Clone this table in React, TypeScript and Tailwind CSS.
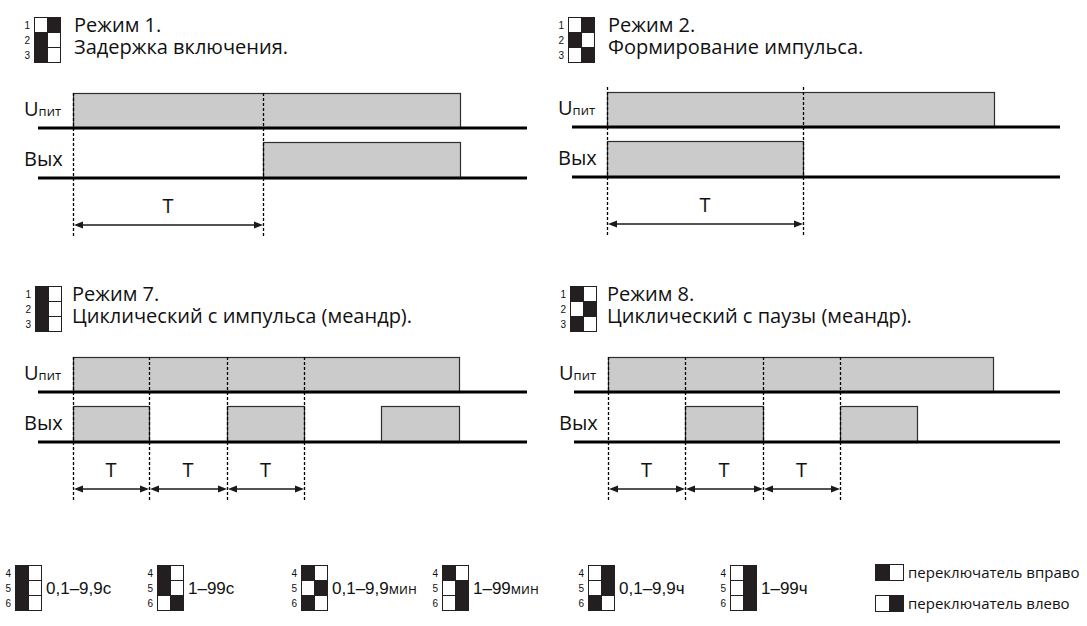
import React from 'react'

type Cell = 0 | 1
type Span = [number, number]

// small DIP-switch picture: numbers on the left, 2 columns of cells
const Dip = ({ nums, cells }: { nums: string[]; cells: Cell[][] }) => (
    <div className="flex items-start">
        <div className="flex w-[6px] flex-col items-end pt-[1px] mr-[4px] font-['Liberation_Sans',Arial,sans-serif] text-[10px] leading-[15px]">
            {nums.map(n => (
                <span key={n}>{n}</span>
            ))}
        </div>
        <div className="grid grid-cols-[12px_12px] grid-rows-[14px_14px_14px] gap-px border border-[#231f20] bg-[#231f20]">
            {cells.flat().map((c, i) => (
                <div key={i} className={c ? 'bg-[#231f20]' : 'bg-white'} />
            ))}
        </div>
    </div>
)

type DiagramProps = {
    base: Span
    upit: Span
    outs: Span[]
    dashes: number[]
    dashTop: number
    ts: Span[]
}

const W = 534
const H = 152

const Diagram = ({ base, upit, outs, dashes, dashTop, ts }: DiagramProps) => (
    <div className="grid">
        <svg className="[grid-area:1/1] block" width={W} height={H} viewBox={`0 0 ${W} ${H}`}>
            <rect x={upit[0] + 0.5} y={7.5} width={upit[1] - upit[0]} height={35} fill="#cbcbcb" stroke="#2e2e2e" strokeWidth={1.2} />
            {outs.map(([a, b]) => (
                <rect key={a} x={a + 0.5} y={56.5} width={b - a} height={36} fill="#cbcbcb" stroke="#2e2e2e" strokeWidth={1.2} />
            ))}
            <line x1={base[0]} x2={base[1]} y1={42} y2={42} stroke="#000" strokeWidth={3} />
            <line x1={base[0]} x2={base[1]} y1={92} y2={92} stroke="#000" strokeWidth={3} />
            {dashes.map(x => (
                <line key={x} x1={x + 0.5} x2={x + 0.5} y1={dashTop} y2={151} stroke="#000" strokeWidth={1.3} strokeDasharray="3 2" />
            ))}
            {ts.map(([a, b]) => (
                <g key={a}>
                    <line x1={a + 6} x2={b - 6} y1={139} y2={139} stroke="#1a1a1a" strokeWidth={1.6} />
                    <polygon points={`${a + 1},139 ${a + 10},135.5 ${a + 10},142.5`} fill="#1a1a1a" />
                    <polygon points={`${b},139 ${b - 9},135.5 ${b - 9},142.5`} fill="#1a1a1a" />
                    <text x={(a + b) / 2} y={127} textAnchor="middle" fontSize={20} fontFamily="'Open Sans', sans-serif" fill="#111">
                        T
                    </text>
                </g>
            ))}
        </svg>
        {/* row labels over the drawing */}
        <div className="[grid-area:1/1] flex flex-col items-start pl-[24px]">
            <div className="mt-[13px] text-[20px] leading-[20px]">
                U<span className="text-[13px] leading-none">пит</span>
            </div>
            <div className="mt-[30px] text-[20px] leading-[20px]">Вых</div>
        </div>
    </div>
)

type PanelProps = DiagramProps & {
    title: string
    subtitle: string
    cells: Cell[][]
    headPad: string
    titleGap: string
    diagramGap: string
}

const Panel = ({ title, subtitle, cells, headPad, titleGap, diagramGap, ...d }: PanelProps) => (
    <div className="flex flex-col pt-[17px]">
        <div className={`flex items-start ${headPad}`}>
            <Dip nums={['1', '2', '3']} cells={cells} />
            <div className={`-mt-[3px] text-[20px] leading-[22px] ${titleGap}`}>
                <div>{title}</div>
                <div>{subtitle}</div>
            </div>
        </div>
        <div className={diagramGap}>
            <Diagram {...d} />
        </div>
    </div>
)

const ranges: { cells: Cell[][]; value: string; unit?: string; w: string }[] = [
    { cells: [[1, 0], [1, 0], [1, 0]], value: '0,1–9,9с', w: 'w-[142px]' },
    { cells: [[1, 0], [1, 0], [0, 1]], value: '1–99с', w: 'w-[144px]' },
    { cells: [[1, 0], [0, 1], [1, 0]], value: '0,1–9,9', unit: 'мин', w: 'w-[141px]' },
    { cells: [[1, 0], [0, 1], [0, 1]], value: '1–99', unit: 'мин', w: 'w-[146px]' },
    { cells: [[0, 1], [0, 1], [1, 0]], value: '0,1–9,9ч', w: 'w-[142px]' },
    { cells: [[0, 1], [0, 1], [0, 1]], value: '1–99ч', w: 'w-[155px]' },
]

const Toggle = ({ left }: { left: boolean }) => (
    <div className="flex gap-px border border-[#231f20] bg-[#231f20]">
        <div className={`w-[13px] h-[15px] ${left ? 'bg-[#231f20]' : 'bg-white'}`} />
        <div className={`w-[13px] h-[15px] ${left ? 'bg-white' : 'bg-[#231f20]'}`} />
    </div>
)

export default function App() {
    return (
        <div className="w-[1087px] h-[626px] overflow-hidden bg-white text-[#111] font-['Open_Sans',sans-serif]">
            <div className="grid grid-cols-[534px_553px] h-[269px]">
                <Panel
                    title="Режим 1."
                    subtitle="Задержка включения."
                    cells={[[0, 1], [1, 0], [1, 0]]}
                    headPad="pl-[24px]"
                    titleGap="ml-[13px]"
                    diagramGap="mt-[23px]"
                    base={[38, 527]}
                    upit={[73, 460]}
                    outs={[[263, 460]]}
                    dashes={[73, 263]}
                    dashTop={7}
                    ts={[[73, 263]]}
                />
                <Panel
                    title="Режим 2."
                    subtitle="Формирование импульса."
                    cells={[[0, 1], [1, 0], [0, 1]]}
                    headPad="pl-[24px]"
                    titleGap="ml-[13px]"
                    diagramGap="mt-[22px]"
                    base={[38, 526]}
                    upit={[73, 460]}
                    outs={[[73, 269]]}
                    dashes={[73, 269]}
                    dashTop={2}
                    ts={[[73, 269]]}
                />
            </div>
            <div className="grid grid-cols-[535px_552px] h-[269px]">
                <Panel
                    title="Режим 7."
                    subtitle="Циклический с импульса (меандр)."
                    cells={[[1, 0], [1, 0], [1, 0]]}
                    headPad="pl-[25px]"
                    titleGap="ml-[10px]"
                    diagramGap="mt-[18px]"
                    base={[38, 527]}
                    upit={[73, 459]}
                    outs={[[73, 149], [227, 304], [381, 459]]}
                    dashes={[73, 149, 227, 304]}
                    dashTop={7}
                    ts={[[73, 149], [149, 227], [227, 304]]}
                />
                <Panel
                    title="Режим 8."
                    subtitle="Циклический с паузы (меандр)."
                    cells={[[1, 0], [0, 1], [1, 0]]}
                    headPad="pl-[25px]"
                    titleGap="ml-[10px]"
                    diagramGap="mt-[18px]"
                    base={[39, 525]}
                    upit={[73, 458]}
                    outs={[[150, 228], [305, 382]]}
                    dashes={[73, 150, 228, 305]}
                    dashTop={7}
                    ts={[[73, 150], [150, 228], [228, 305]]}
                />
            </div>

            {/* time ranges + switch legend */}
            <div className="flex items-start pl-[5px] pt-[27px]">
                {ranges.map(r => (
                    <div key={r.value + (r.unit ?? '')} className={`flex items-center shrink-0 ${r.w}`}>
                        <div className="flex items-start mr-[2px]">
                            <Dip nums={['4', '5', '6']} cells={r.cells} />
                        </div>
                        <span className="ml-[2px] font-['Liberation_Sans',Arial,sans-serif] text-[17px] leading-none">
                            {r.value}
                            {r.unit && <span className="font-['Open_Sans',sans-serif] text-[14px]">{r.unit}</span>}
                        </span>
                    </div>
                ))}
                <div className="flex flex-col gap-[14px] -mt-[1px]">
                    <div className="flex items-center">
                        <Toggle left />
                        <span className="ml-[4px] text-[15px] leading-none">переключатель вправо</span>
                    </div>
                    <div className="flex items-center">
                        <Toggle left={false} />
                        <span className="ml-[4px] text-[15px] leading-none">переключатель влево</span>
                    </div>
                </div>
            </div>
        </div>
    )
}
